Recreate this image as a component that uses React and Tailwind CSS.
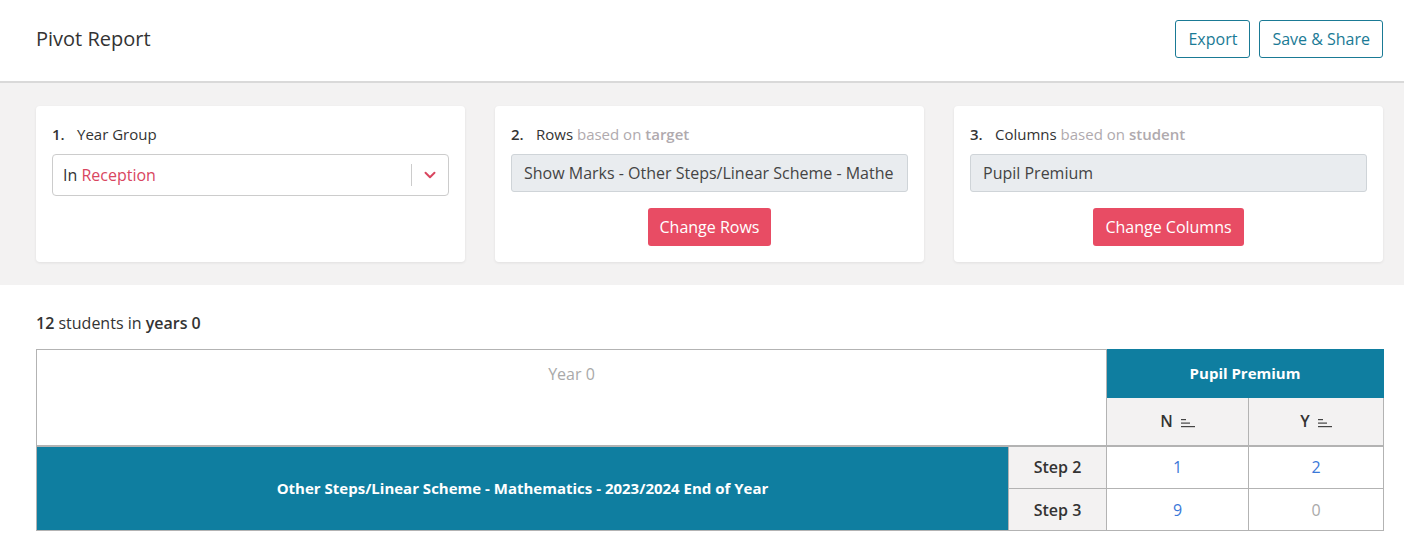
import { ChevronDown } from "lucide-react";

const TEAL = "bg-[#0f7ea0]";

function SortIcon() {
  return (
    <svg width="14" height="10" viewBox="0 0 14 10" className="inline-block ml-2 align-middle">
      <rect x="0" y="1" width="5" height="1.2" fill="#444" />
      <rect x="0" y="4.5" width="9" height="1.2" fill="#444" />
      <rect x="0" y="8" width="14" height="1.2" fill="#444" />
    </svg>
  );
}

function Card({ num, children }) {
  return (
    <div className="bg-white rounded shadow-[0_1px_3px_rgba(0,0,0,0.08)] h-[156px] px-4 pt-[18px]">
      <div className="text-[15px] text-[#333] flex items-center h-[20px]">
        <span className="font-semibold w-[25px]">{num}.</span>
        {children[0]}
      </div>
      {children[1]}
    </div>
  );
}

export default function App() {
  return (
    <div className="w-[1404px] h-[552px] bg-white text-[#333] overflow-hidden" style={{ fontFamily: '"Open Sans", "Noto Sans", sans-serif' }}>
      {/* Header */}
      <div className="h-[83px] flex items-center justify-between pl-9 pr-[21px] border-b-2 border-[#d9d9d9]">
        <h1 className="text-[20px] text-[#333] -mt-[4px]">Pivot Report</h1>
        <div className="flex gap-[9px] -mt-[4px]">
          <button className="h-[38px] px-3 border border-[#1a7a95] text-[#1a7a95] rounded-[3px] text-[16px]">Export</button>
          <button className="h-[38px] px-3 border border-[#1a7a95] text-[#1a7a95] rounded-[3px] text-[16px]">Save &amp; Share</button>
        </div>
      </div>

      {/* Config band */}
      <div className="bg-[#f3f2f2] pl-9 pr-[21px] pt-[23px] pb-[23px] grid grid-cols-3 gap-[30px]">
        <Card num="1">
          {[
            <span key="l">Year Group</span>,
            <div key="s" className="mt-[10px] h-[42px] border border-[#cccccc] rounded flex items-center text-[16px]">
              <div className="flex-1 px-[10px]">
                In <span className="text-[#d9465f]">Reception</span>
              </div>
              <div className="w-px h-[22px] bg-[#cccccc]" />
              <div className="w-[36px] flex justify-center">
                <ChevronDown size={18} strokeWidth={2.6} className="text-[#d9465f]" />
              </div>
            </div>,
          ]}
        </Card>
        <Card num="2">
          {[
            <span key="l">
              Rows <span className="text-[#b0aaae]">based on</span> <span className="text-[#b0aaae] font-semibold">target</span>
            </span>,
            <div key="b">
              <div className="mt-[10px] h-[38px] border border-[#cfd4d8] bg-[#e9ecef] rounded-[3px] flex items-center px-3 text-[16px] text-[#444] overflow-hidden whitespace-nowrap">
                <span className="block overflow-hidden">Show Marks - Other Steps/Linear Scheme - Mathe</span>
              </div>
              <div className="flex justify-center mt-4">
                <button className="h-[38px] px-3 bg-[#e84c64] text-white rounded-[3px] text-[16px]">Change Rows</button>
              </div>
            </div>,
          ]}
        </Card>
        <Card num="3">
          {[
            <span key="l">
              Columns <span className="text-[#b0aaae]">based on</span> <span className="text-[#b0aaae] font-semibold">student</span>
            </span>,
            <div key="b">
              <div className="mt-[10px] h-[38px] border border-[#cfd4d8] bg-[#e9ecef] rounded-[3px] flex items-center px-3 text-[16px] text-[#444]">
                Pupil Premium
              </div>
              <div className="flex justify-center mt-4">
                <button className="h-[38px] px-3 bg-[#e84c64] text-white rounded-[3px] text-[16px]">Change Columns</button>
              </div>
            </div>,
          ]}
        </Card>
      </div>

      {/* Summary */}
      <div className="pl-9 pt-[26px] text-[16px] text-[#333] h-[64px]">
        <span className="font-semibold">12</span> students in <span className="font-semibold">years 0</span>
      </div>

      <div className="pl-9 pr-[21px]">
        <table className="w-full border-collapse text-[16px] table-fixed">
          <colgroup>
            <col className="w-[972px]" />
            <col className="w-[98px]" />
            <col className="w-[142px]" />
            <col className="w-[135px]" />
          </colgroup>
          <tbody>
            <tr className="h-[48px]">
              <td colSpan={2} rowSpan={2} className="border border-[#b3b3b3] border-b-2 text-center align-top pt-[12px] text-[#a9a9a9] bg-white">
                Year 0
              </td>
              <td colSpan={2} className={`${TEAL} text-white font-bold text-[15px] text-center border border-[#0f7ea0]`}>
                Pupil Premium
              </td>
            </tr>
            <tr className="h-[48px]">
              <td className="bg-[#f3f2f2] border border-[#b3b3b3] border-b-2 text-center font-semibold">
                N<SortIcon />
              </td>
              <td className="bg-[#f3f2f2] border border-[#b3b3b3] border-b-2 text-center font-semibold">
                Y<SortIcon />
              </td>
            </tr>
            <tr className="h-[43px]">
              <td rowSpan={2} className={`${TEAL} text-white font-bold text-[15px] text-center border border-[#b3b3b3]`}>
                Other Steps/Linear Scheme - Mathematics - 2023/2024 End of Year
              </td>
              <td className="bg-[#f3f2f2] border border-[#b3b3b3] text-center font-semibold">Step 2</td>
              <td className="border border-[#b3b3b3] text-center text-[#3b78d8]">1</td>
              <td className="border border-[#b3b3b3] text-center text-[#3b78d8]">2</td>
            </tr>
            <tr className="h-[42px]">
              <td className="bg-[#f3f2f2] border border-[#b3b3b3] text-center font-semibold">Step 3</td>
              <td className="border border-[#b3b3b3] text-center text-[#3b78d8]">9</td>
              <td className="border border-[#b3b3b3] text-center text-[#a9a9a9]">0</td>
            </tr>
          </tbody>
        </table>
      </div>
    </div>
  );
}
